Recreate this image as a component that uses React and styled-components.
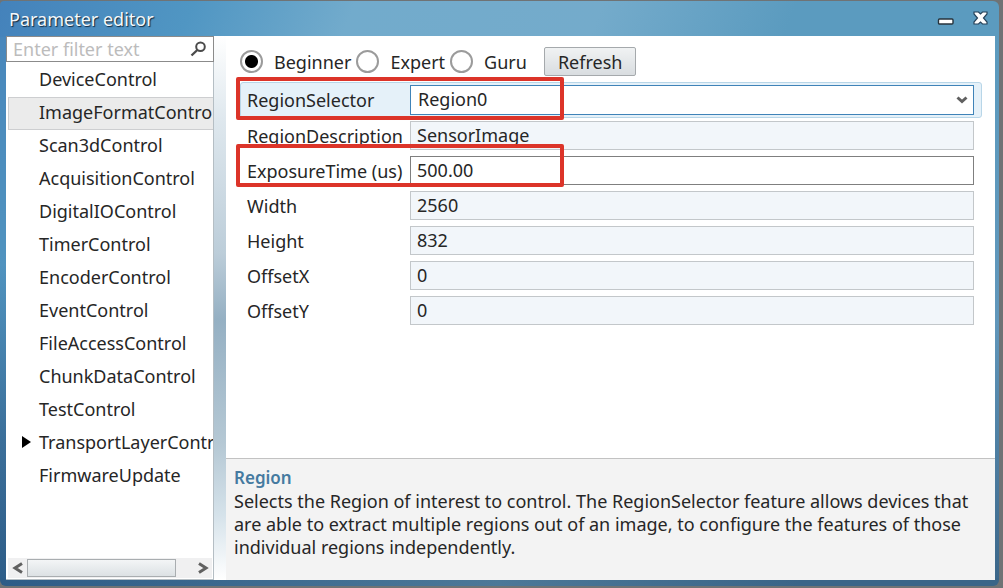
import React from "react";
import styled, { createGlobalStyle, css } from "styled-components";

const GlobalStyle = createGlobalStyle`
  * { box-sizing: border-box; }
  html, body { margin: 0; padding: 0; background: #6f7375; }
  body, button, input, select {
    font-family: "Noto Sans", "Open Sans", sans-serif;
    font-size: 18px;
    color: #262626;
  }
`;

const Window = styled.div`
  display: flex;
  flex-direction: column;
  min-height: calc(100vh - 3px);
  margin: 1px 4px 2px 0;
  padding: 0 4px 6px 6px;
  border-radius: 4px 6px 6px 6px;
  background:
    linear-gradient(112deg, #4482bb 0, #5096c3 180px, #72abcc 330px, #74abcb 560px, #5b9bbf 740px, #5b9bbf 100%) top / 100% 36px no-repeat,
    linear-gradient(90deg, #2d5c87 0, #4c7898 50%, #3a6588 80%, #3a6588 100%) bottom / 100% 8px no-repeat,
    linear-gradient(180deg, #4785bb 0, #5093bf 45%, #3b6f9a 75%, #2d5c87 100%) left / 50% 100% no-repeat,
    linear-gradient(180deg, #5b9bbf 0, #6096ba 55%, #3a6588 100%);
`;

const TitleBar = styled.header`
  display: flex;
  align-items: center;
  justify-content: space-between;
  height: 35px;
  padding: 0 7px 0 3px;
`;

const Title = styled.h1`
  margin: 0;
  font-size: 18px;
  font-weight: 400;
  line-height: 24px;
  color: #f4f8fb;
  text-shadow: 1px 1px 1px #12283c;
`;

const WindowButtons = styled.div`
  display: flex;
  gap: 18px;
`;

const WindowButton = styled.button`
  display: flex;
  padding: 0;
  border: 0;
  background: none;
`;

const Body = styled.main`
  display: flex;
  flex: 1;
  min-width: 0;
`;

const Sidebar = styled.aside`
  display: flex;
  flex-direction: column;
  flex: 0 0 208px;
  min-width: 0;
  background: #fff;
  border-right: 1px solid #b5bec4;
  border-bottom: 1px solid #b5bec4;
`;

const FilterBox = styled.label`
  display: flex;
  align-items: center;
  height: 26px;
  padding: 0 6px;
  margin-right: -1px;
  border: 1px solid #8b8b8b;
`;

const FilterInput = styled.input`
  flex: 1;
  min-width: 0;
  padding: 0;
  border: 0;
  outline: 0;
  background: none;
  line-height: 22px;
  &::placeholder { color: #bcbcbc; opacity: 1; }
`;

const Tree = styled.ul`
  flex: 1;
  margin: 0;
  padding: 2px 0 0 2px;
  overflow: hidden;
  list-style: none;
`;

const TreeItem = styled.li`
  display: flex;
  align-items: center;
  height: 33px;
  padding-bottom: 4px;
  white-space: nowrap;
  border: solid transparent;
  border-width: 1px 0 1px 1px;
  ${(p) => p.$selected && css`
    background: #ebebeb;
    border-color: #cdced0;
  `}
`;

const Expander = styled.span`
  display: flex;
  flex: 0 0 30px;
  padding-left: 12px;
`;

const ScrollBar = styled.div`
  display: flex;
  align-items: center;
  height: 20px;
  margin: 0 1px 1px 2px;
  background: #f0f0f1;
`;

const ScrollButton = styled.button`
  display: flex;
  align-items: center;
  justify-content: center;
  width: 19px;
  height: 20px;
  padding: 0;
  border: 0;
  background: none;
`;

const ScrollTrack = styled.div`
  flex: 1;
`;

const ScrollThumb = styled.div`
  width: 90%;
  height: 18px;
  border: 1px solid #a9adb0;
  background: linear-gradient(#f3f5f6, #dce1e4);
`;

const Splitter = styled.div`
  flex: 0 0 12px;
  background: linear-gradient(180deg, #fff 0, #dfe8ee 15%, #bccdd9 40%, #95b0c3 52%, #b5c8d4 75%, #d5e2ea 88%, #fff 100%);
`;

const Content = styled.section`
  display: flex;
  flex-direction: column;
  flex: 1;
  min-width: 0;
  background: #fff;
`;

const Toolbar = styled.div`
  display: flex;
  align-items: center;
  height: 46px;
  padding: 5px 14px 0;
`;

const Level = styled.label`
  display: flex;
  align-items: center;
  gap: 11px;
  margin-right: 5px;
`;

const Radio = styled.input`
  appearance: none;
  width: 23px;
  height: 23px;
  margin: 0;
  border: 2px solid #9b9b9b;
  border-radius: 50%;
  background: #fff;
  &:checked { background: radial-gradient(circle, #000 6px, #fff 7px); }
`;

const RefreshButton = styled.button`
  height: 29px;
  margin-left: 12px;
  padding: 0 13px;
  border: 1px solid #a5a9ac;
  border-radius: 2px;
  background: linear-gradient(#f0f2f3, #d9dde0);
  line-height: 24px;
`;

const PropertyList = styled.form`
  flex: 1;
  margin: 0;
  padding: 0 13px 0 14px;
`;

const Property = styled.div`
  position: relative;
  display: flex;
  align-items: center;
  height: 35px;
  padding-right: 7px;
  padding-left: 6px;
  border: 1px solid transparent;
  ${(p) => p.$active && css`
    height: 36px;
    border-color: #b8d6e8;
    border-radius: 3px;
    background: #e5f1f9;
  `}
`;

const PropertyLabel = styled.label`
  flex: 0 0 163px;
  line-height: 24px;
  white-space: nowrap;
`;

const PropertyInput = styled.input`
  flex: 1;
  min-width: 0;
  height: 29px;
  padding: 0 6px 2px;
  border: 1px solid #7f7f7f;
  border-radius: 0;
  background: #fff;
  outline: 0;
  &:read-only {
    border-color: #c3c7ca;
    background: #f2f6fa;
  }
`;

const SelectBox = styled.div`
  display: grid;
  flex: 1;
  align-items: center;
  & > * { grid-area: 1 / 1; }
  & > svg { justify-self: end; margin-right: 6px; pointer-events: none; }
`;

const PropertySelect = styled.select`
  appearance: none;
  width: 100%;
  height: 30px;
  padding: 0 7px 2px;
  border: 1px solid #3f83b8;
  border-radius: 0;
  background: #fff;
  outline: 0;
`;

const Highlight = styled.span`
  position: absolute;
  top: ${(p) => (p.$raised ? "-10px" : "-6px")};
  left: -5px;
  width: 328px;
  height: 43px;
  border: 4px solid #dc3429;
  border-radius: 2px;
  pointer-events: none;
`;

const Help = styled.footer`
  min-height: 122px;
  padding: 7px 8px;
  border-top: 1px solid #c2c2c2;
  background: #f3f3f3;
`;

const HelpTitle = styled.h2`
  margin: 0;
  font-size: 17px;
  font-weight: 600;
  line-height: 24px;
  color: #457aa0;
`;

const HelpText = styled.p`
  margin: 0;
  font-size: 18px;
  line-height: 23px;
`;

const categories = [
  "DeviceControl",
  "ImageFormatControl",
  "Scan3dControl",
  "AcquisitionControl",
  "DigitalIOControl",
  "TimerControl",
  "EncoderControl",
  "EventControl",
  "FileAccessControl",
  "ChunkDataControl",
  "TestControl",
  "TransportLayerControl",
  "FirmwareUpdate",
];

const properties = [
  { name: "RegionDescription", value: "SensorImage" },
  { name: "ExposureTime (us)", value: "500.00", editable: true, marked: true },
  { name: "Width", value: "2560" },
  { name: "Height", value: "832" },
  { name: "OffsetX", value: "0" },
  { name: "OffsetY", value: "0" },
];

const Chevron = ({ d, width = 12, height = 12 }) => (
  <svg width={width} height={height} viewBox={`0 0 ${width} ${height}`}>
    <path d={d} fill="none" stroke="#606060" strokeWidth="3" />
  </svg>
);

export default function App() {
  return (
    <>
      <GlobalStyle />
      <Window>
        <TitleBar>
          <Title>Parameter editor</Title>
          <WindowButtons>
            <WindowButton aria-label="Minimize">
              <svg width="18" height="16" viewBox="0 0 18 16">
                <rect x="1.5" y="8" width="14.500" height="5" rx="1" fill="#fff" stroke="#27333c" strokeWidth="1.4" />
              </svg>
            </WindowButton>
            <WindowButton aria-label="Close">
              <svg width="15" height="14" viewBox="0 0 15 14">
                <path d="M1 1h4.500l2 2 2-2H14v2l-3.500 4L14 11v2H9.500l-2-2-2 2H1v-2l3.500-4L1 3z" fill="#fff" stroke="#27435a" strokeWidth="1.2" />
              </svg>
            </WindowButton>
          </WindowButtons>
        </TitleBar>
        <Body>
          <Sidebar>
            <FilterBox>
              <FilterInput type="text" placeholder="Enter filter text" aria-label="Filter" />
              <svg width="17" height="16" viewBox="0 0 17 16">
                <circle cx="10.500" cy="5.800" r="4.300" fill="none" stroke="#4b4b4b" strokeWidth="2" />
                <path d="M7.300 9 1.500 14.500" stroke="#4b4b4b" strokeWidth="2.400" />
              </svg>
            </FilterBox>
            <Tree>
              {categories.map((name) => (
                <TreeItem key={name} $selected={name === "ImageFormatControl"}>
                  <Expander>
                    {name === "TransportLayerControl" && (
                      <svg width="10" height="12" viewBox="0 0 10 12">
                        <path d="M1 0v12l9-6z" fill="#000" />
                      </svg>
                    )}
                  </Expander>
                  {name}
                </TreeItem>
              ))}
            </Tree>
            <ScrollBar>
              <ScrollButton aria-label="Scroll left">
                <Chevron d="M10 1.500 3 6l7 4.500" />
              </ScrollButton>
              <ScrollTrack>
                <ScrollThumb />
              </ScrollTrack>
              <ScrollButton aria-label="Scroll right">
                <Chevron d="M2 1.500 9 6l-7 4.500" />
              </ScrollButton>
            </ScrollBar>
          </Sidebar>
          <Splitter />
          <Content>
            <Toolbar>
              {["Beginner", "Expert", "Guru"].map((level) => (
                <Level key={level}>
                  <Radio type="radio" name="level" defaultChecked={level === "Beginner"} />
                  {level}
                </Level>
              ))}
              <RefreshButton type="button">Refresh</RefreshButton>
            </Toolbar>
            <PropertyList>
              <Property $active>
                <PropertyLabel htmlFor="RegionSelector">RegionSelector</PropertyLabel>
                <SelectBox>
                  <PropertySelect id="RegionSelector">
                    <option>Region0</option>
                  </PropertySelect>
                  <Chevron width={12} height={8} d="M1.500 1.500 6 5.500l4.500-4" />
                </SelectBox>
                <Highlight />
              </Property>
              {properties.map((p) => (
                <Property key={p.name}>
                  <PropertyLabel htmlFor={p.name}>{p.name}</PropertyLabel>
                  <PropertyInput id={p.name} type="text" defaultValue={p.value} readOnly={!p.editable} />
                  {p.marked && <Highlight $raised />}
                </Property>
              ))}
            </PropertyList>
            <Help>
              <HelpTitle>Region</HelpTitle>
              <HelpText>
                Selects the Region of interest to control. The RegionSelector feature allows devices that
                are able to extract multiple regions out of an image, to configure the features of those
                individual regions independently.
              </HelpText>
            </Help>
          </Content>
        </Body>
      </Window>
    </>
  );
}
